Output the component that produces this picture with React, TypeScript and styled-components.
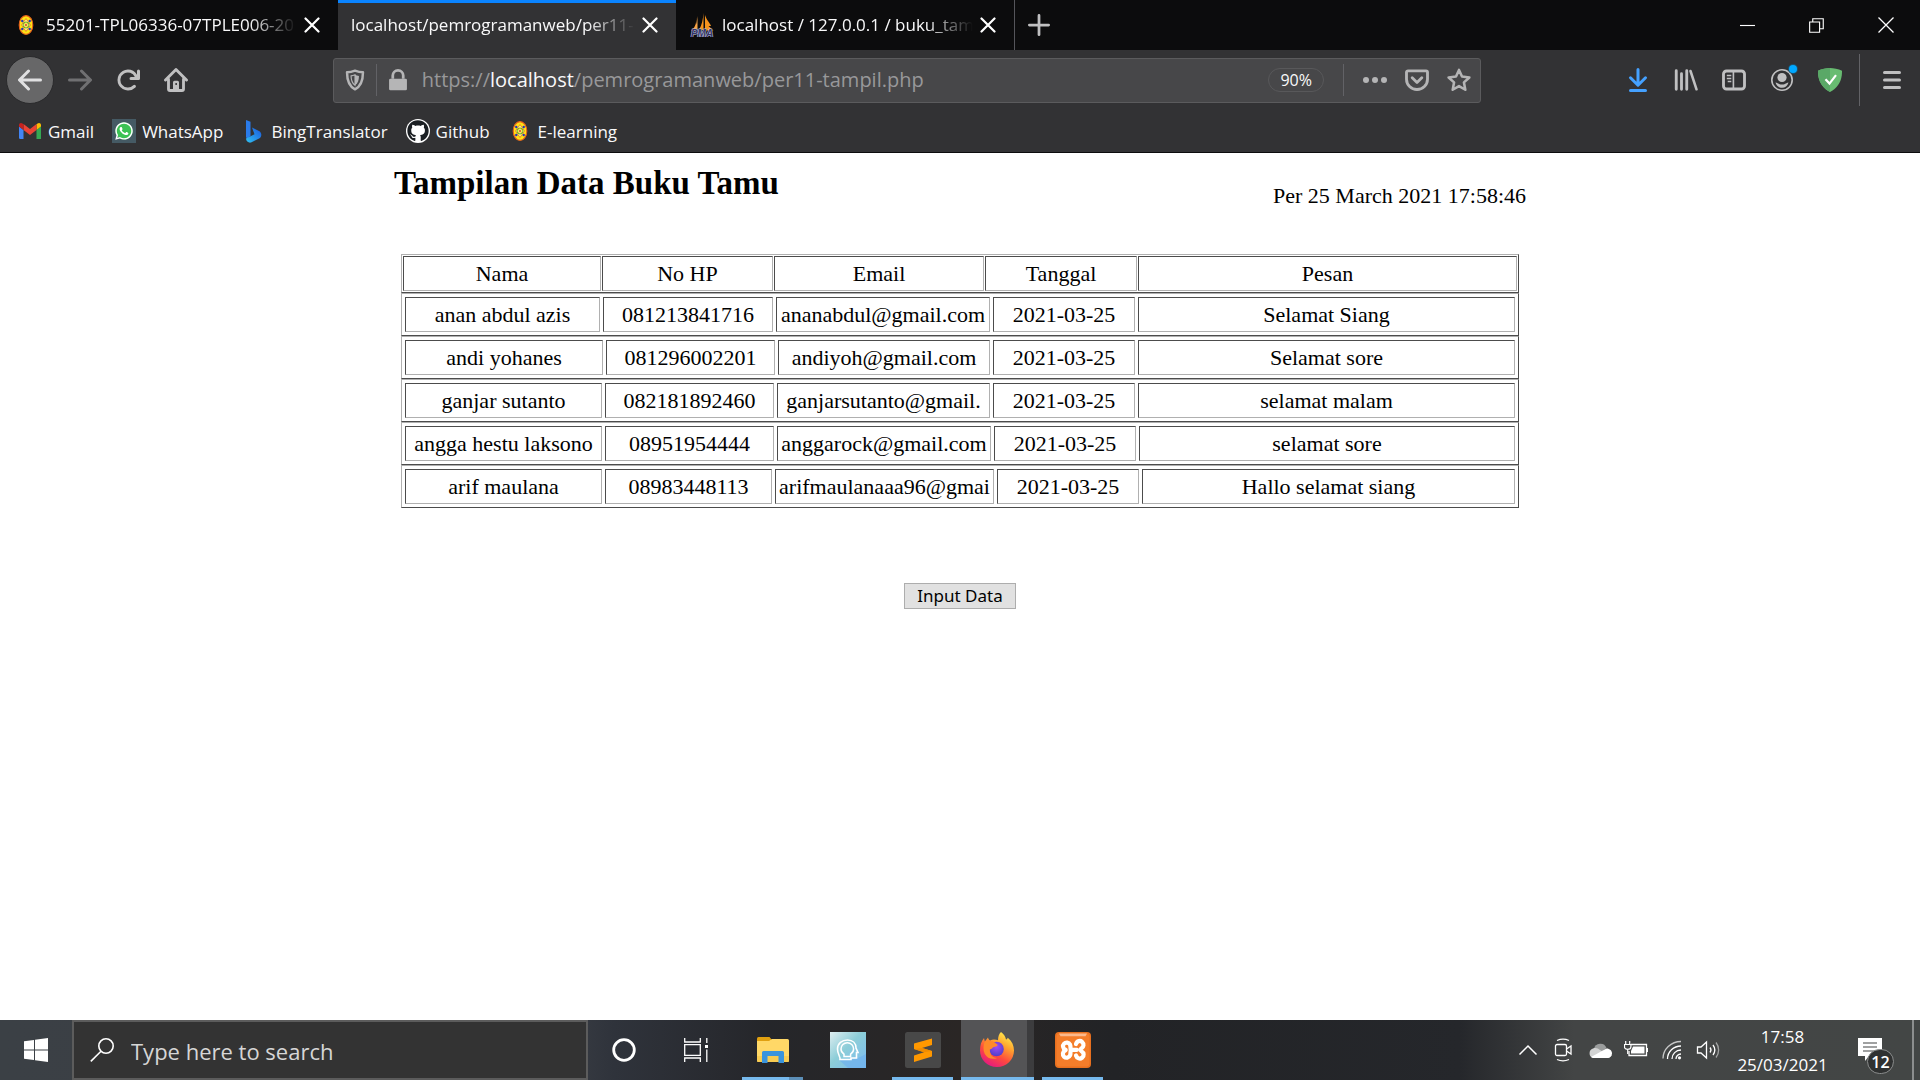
import React from "react";
import styled, { createGlobalStyle, css } from "styled-components";
import { FaGithub, FaWhatsapp } from "react-icons/fa";

const ui = `"Open Sans", "Noto Sans", sans-serif`;

const Global = createGlobalStyle`
  *, *::before, *::after { box-sizing: border-box; }
  body { margin: 0; background: #fff; }
  button { border: 0; padding: 0; background: none; color: inherit; font: inherit; }
`;

const Shell = styled.div`
  display: flex;
  flex-direction: column;
  min-height: 100vh;
`;

/* ---------- tab strip ---------- */

const Chrome = styled.header`
  background: #323234;
  color: #f9f9fa;
  font-family: ${ui};
  font-size: 17px;
  border-bottom: 1px solid #0c0c0d;
`;

const TabStrip = styled.div`
  display: flex;
  height: 50px;
  background: #0c0c0d;
`;

const Tab = styled.div<{ $active?: boolean; $plain?: boolean }>`
  display: flex;
  align-items: center;
  width: 338px;
  padding: 0 11px 0 ${(p) => (p.$plain ? 13 : 14)}px;
  ${(p) =>
    p.$active &&
    css`
      background: #323234;
      box-shadow: inset 0 3px #0a84ff;
    `}
`;

const TabTitle = styled.span`
  flex: 1;
  min-width: 0;
  white-space: nowrap;
  line-height: 24px;
  mask-image: linear-gradient(to left, transparent, #000 48px);
`;

const TabIcon = styled.span`
  display: flex;
  width: 24px;
  margin-right: 8px;
`;

const TabClose = styled.button`
  display: flex;
  justify-content: center;
  width: 30px;
`;

const NewTab = styled.button`
  display: flex;
  align-items: center;
  justify-content: center;
  width: 48px;
  border-left: 1px solid #55555a;
`;

const WindowButtons = styled.div`
  display: flex;
  margin-left: auto;
`;

const WindowButton = styled.button`
  display: flex;
  align-items: center;
  justify-content: center;
  width: 69px;
`;

/* ---------- navigation bar ---------- */

const NavBar = styled.div`
  display: flex;
  align-items: center;
  height: 60px;
  padding: 0 4px 0 6px;
  color: #c0c0c1;
`;

const BackButton = styled.button`
  display: flex;
  align-items: center;
  justify-content: center;
  width: 48px;
  height: 48px;
  margin-right: 2px;
  border: 1px solid #2a2a2c;
  border-radius: 50%;
  background: #676768;
  color: #e0e0e1;
`;

const ToolButton = styled.button<{ $color?: string; $width?: number }>`
  display: flex;
  align-items: center;
  justify-content: center;
  width: ${(p) => p.$width ?? 48}px;
  height: 44px;
  color: ${(p) => p.$color ?? "inherit"};
`;

const Spring = styled.div`
  flex: 133 1 0;
`;

const UrlBar = styled.div`
  display: flex;
  align-items: center;
  flex: 1148 1 0;
  height: 45px;
  border: 1px solid #5b5b5d;
  border-radius: 3px;
  background: #474749;
  color: #b5b5b6;
`;

const Rule = styled.span<{ $tall?: boolean }>`
  width: 1px;
  height: ${(p) => (p.$tall ? 52 : 32)}px;
  background: #626266;
`;

const UrlText = styled.div`
  flex: 1;
  padding-left: 3px;
  color: #98989a;
  font-size: 20px;
  line-height: 30px;
  white-space: nowrap;
  overflow: hidden;
`;

const Host = styled.span`
  color: #f9f9fa;
`;

const ZoomLevel = styled.button`
  width: 56px;
  height: 24px;
  margin-right: 19px;
  border: 1px solid #58585a;
  border-radius: 12px;
  color: #f9f9fa;
  font-size: 16px;
  line-height: 22px;
`;

const PageActions = styled.div`
  display: flex;
  padding-left: 10px;
`;

const MenuGroup = styled.div`
  display: flex;
  align-items: center;
  gap: 8px;
  padding-left: 5px;
`;

const Bookmarks = styled.nav`
  display: flex;
  gap: 18px;
  height: 42px;
  padding-left: 18px;
`;

const Bookmark = styled.a`
  display: flex;
  align-items: center;
  gap: 6px;
  color: inherit;
  text-decoration: none;
`;

/* ---------- guest book page ---------- */

const Page = styled.main`
  flex: 1;
  width: 100%;
  max-width: 1134px;
  margin: 0 auto;
  padding-top: 12px;
  color: #000;
  font-family: "Liberation Serif", "Times New Roman", serif;
  font-size: 22px;
`;

const PageHead = styled.div`
  display: flex;
  justify-content: space-between;
  align-items: flex-start;
  height: 89px;
`;

const Title = styled.h1`
  margin: 0;
  padding-left: 1px;
  font-size: 33px;
  line-height: 36px;
`;

const Stamp = styled.p`
  margin: 0;
  padding: 18px 1px 0 0;
  line-height: 26px;
`;

const Guests = styled.table`
  display: block;
  margin: 0 8px;
`;

const HeadGroup = styled.thead`
  display: block;
`;

const BodyGroup = styled.tbody`
  display: block;
`;

const Row = styled.tr<{ $columns: number[]; $head?: boolean }>`
  display: grid;
  grid-template-columns: ${(p) => p.$columns.map((c) => `minmax(0, ${c}fr)`).join(" ")};
  gap: ${(p) => (p.$head ? 1 : 3)}px;
  padding: ${(p) => (p.$head ? 1 : 3)}px;
  border: 1px solid;
  border-color: #b0b0b0 #4c4c4c #4c4c4c #b0b0b0;
`;

const cell = css`
  border: 1px solid;
  border-color: #4c4c4c #b0b0b0 #b0b0b0 #4c4c4c;
  padding: 3px;
  line-height: 27px;
  font-weight: normal;
  text-align: center;
  white-space: nowrap;
`;

const HeadCell = styled.th`
  ${cell}
`;

const Cell = styled.td`
  ${cell}
`;

const Actions = styled.div`
  display: flex;
  justify-content: center;
  padding-top: 75px;
`;

const InputButton = styled.button`
  padding: 0 12px;
  border: 1px solid #adadad;
  background: #e1e1e1;
  font-family: "Noto Sans", sans-serif;
  font-size: 17px;
  line-height: 24px;
`;

/* ---------- taskbar ---------- */

const Taskbar = styled.footer`
  display: flex;
  height: 60px;
  background: linear-gradient(90deg, #3b4045 0%, #3a3e45 29%, #2f333b 32%, #25262a 40%, #2a2625 50%, #222326 58%, #25272b 76%, #434545 82%, #434645 100%);
  color: #fff;
  font-family: ${ui};
`;

const StartButton = styled.button`
  display: flex;
  align-items: center;
  justify-content: center;
  width: 72px;
`;

const SearchBox = styled.label`
  display: flex;
  align-items: center;
  gap: 17px;
  width: 516px;
  padding-left: 16px;
  border: 2px solid #5c5c5c;
  background: #333;
`;

const SearchInput = styled.input`
  flex: 1;
  min-width: 0;
  padding: 2px 0 0;
  border: 0;
  outline: 0;
  background: none;
  color: #fff;
  font-family: ${ui};
  font-size: 22px;
  &::placeholder { color: #d6d6d6; opacity: 1; }
`;

const TaskButton = styled.button<{ $open?: boolean; $active?: boolean; $stacked?: boolean; $width?: number }>`
  display: flex;
  align-items: center;
  justify-content: center;
  width: ${(p) => p.$width ?? 61}px;
  margin-right: ${(p) => (p.$active ? 8 : 14)}px;
  ${(p) => p.$open && css`box-shadow: inset 0 -3px #76b9ed;`}
  ${(p) =>
    p.$stacked &&
    css`
      box-shadow: none;
      background: linear-gradient(90deg, #76b9ed 47px, #5c8fb8 47px) bottom / 100% 3px no-repeat;
    `}
  ${(p) =>
    p.$active &&
    css`
      margin-left: -6px;
      padding-right: 1px;
      background: linear-gradient(90deg, #545456 66px, #3c3c3e 66px);
    `}
`;

const Plain = styled.div`
  display: flex;
  padding-right: 10px;
`;

const PlainButton = styled.button`
  display: flex;
  align-items: center;
  justify-content: center;
  width: 72px;
`;

const Tray = styled.div`
  display: flex;
  align-items: center;
  margin-left: auto;
`;

const TrayButton = styled.button`
  display: flex;
  align-items: center;
  justify-content: center;
  width: 36px;
  height: 60px;
`;

const Clock = styled.button`
  width: 113px;
  padding-top: 1px;
  font-size: 17px;
  line-height: 28px;
  text-align: center;
`;

const NoticeButton = styled.button`
  display: flex;
  align-items: center;
  position: relative;
  width: 73px;
  height: 60px;
  padding-left: 19px;
`;

const NoticeCount = styled.span`
  position: absolute;
  left: 28px;
  top: 29px;
  width: 27px;
  height: 25px;
  border: 1px solid #8a8c8c;
  border-radius: 13px;
  background: #2f3131;
  font-size: 16px;
  font-weight: 600;
  line-height: 24px;
  text-align: center;
`;

const ShowDesktop = styled.button`
  width: 8px;
  height: 60px;
  border-left: 2px solid #8c8e8e;
`;

/* ---------- drawings ---------- */

const Icon = ({ children, size = 24, box = 16 }: { children: React.ReactNode; size?: number; box?: number }) => (
  <svg width={size} height={size} viewBox={`0 0 ${box} ${box}`} fill="currentColor" aria-hidden="true">
    {children}
  </svg>
);

const Campus = () => (
  <Icon box={24}>
    <ellipse cx="12" cy="12" rx="6.8" ry="9.4" fill="#ffe414" stroke="#e8611c" strokeWidth="1.100" />
    <path d="M12 5.500l4.500 6.500-4.500 6.500L7.500 12z" fill="#fff08a" stroke="#e8711c" strokeWidth=".8" />
    <circle cx="12" cy="12" r="3" fill="#f3ef5a" stroke="#6ab52c" strokeWidth="1" />
    <path d="M10.500 10.500l3 3M13.500 10.500l-3 3" stroke="#c33" strokeWidth=".7" />
    <g fill="#2536b8">
      <circle cx="8.300" cy="8" r="1.200" />
      <circle cx="15.700" cy="8" r="1.200" />
      <circle cx="8.300" cy="16" r="1.200" />
      <circle cx="15.700" cy="16" r="1.200" />
    </g>
  </Icon>
);

const PmaLogo = () => (
  <Icon box={24}>
    <path d="M6 4.500C6.500 9 6 14 1 17.500h5z" fill="#f0902a" />
    <path d="M7.500 3v14H3.500C6 13 7 8 7.500 3z" fill="#f7a54a" />
    <path d="M13.500 0v17H9C12 12 13 6 13.500 0z" fill="#f7941d" />
    <path d="M15 2c1.500 5 5 8 6 11h-2.500l5 4.500H15z" fill="#f7941d" />
    <text x="12" y="23.500" textAnchor="middle" fontFamily="Liberation Sans, sans-serif" fontSize="10" fontWeight="bold" fontStyle="italic" fill="#34346a" stroke="#b9bcd6" strokeWidth="1.200" paintOrder="stroke">PMA</text>
  </Icon>
);

const Cross = () => (
  <Icon size={16}>
    <path d="M1.500 1.500l13 13M14.500 1.500l-13 13" stroke="#fff" strokeWidth="2.200" strokeLinecap="round" />
  </Icon>
);

const BackArrow = () => (
  <Icon>
    <path d="M15 7H3.414l4.293-4.293a1 1 0 0 0-1.414-1.414l-6 6a1 1 0 0 0 0 1.414l6 6a1 1 0 0 0 1.414-1.414L3.414 9H15a1 1 0 0 0 0-2z" />
  </Icon>
);

const ForwardArrow = () => (
  <Icon>
    <path d="M1 7h11.586L8.293 2.707a1 1 0 0 1 1.414-1.414l6 6a1 1 0 0 1 0 1.414l-6 6a1 1 0 0 1-1.414-1.414L12.586 9H1a1 1 0 0 1 0-2z" />
  </Icon>
);

const Reload = () => (
  <Icon>
    <path d="M15 1a1 1 0 0 0-1 1v2.418A6.995 6.995 0 1 0 8 15a6.954 6.954 0 0 0 4.950-2.050 1 1 0 0 0-1.414-1.414A5.019 5.019 0 1 1 12.549 6H10a1 1 0 0 0 0 2h5a1 1 0 0 0 1-1V2a1 1 0 0 0-1-1z" />
  </Icon>
);

const Home = () => (
  <Icon>
    <path d="M1 8l7-7 7 7M3 7.500V14a1 1 0 0 0 1 1h8a1 1 0 0 0 1-1V7.500" fill="none" stroke="currentColor" strokeWidth="1.900" strokeLinecap="round" strokeLinejoin="round" />
    <path d="M6 14.500V9.500a1 1 0 0 1 1-1h2a1 1 0 0 1 1 1v5zM7.600 10v1.400h1V10z" fillRule="evenodd" />
  </Icon>
);

const Shield = () => (
  <Icon size={22}>
    <path d="M8 1.200c2 .8 4 1.200 5.800 1.200 0 5.600-1 10-5.800 12.400C3.200 12.400 2.200 8 2.200 2.400 4 2.400 6 2 8 1.200z" fill="none" stroke="currentColor" strokeWidth="1.800" strokeLinejoin="round" />
    <path d="M8 4.200c.9.400 1.900.7 2.900.8-.1 3-.7 5.300-2.900 6.900z" />
    <path d="M8 4.200v7.700C5.800 10.300 5.200 8 5.100 5c1-.1 2-.4 2.900-.8z" fill="none" stroke="currentColor" strokeWidth=".8" />
  </Icon>
);

const Lock = () => (
  <Icon size={22}>
    <path d="M4.200 7V4.800a3.800 3.800 0 0 1 7.600 0V7" fill="none" stroke="currentColor" strokeWidth="2" />
    <rect x="1.500" y="7" width="13" height="8.500" rx="1" />
  </Icon>
);

const Dots = () => (
  <Icon>
    <circle cx="2" cy="8" r="2" />
    <circle cx="8" cy="8" r="2" />
    <circle cx="14" cy="8" r="2" />
  </Icon>
);

const Pocket = () => (
  <Icon>
    <path d="M2 1.900h12a1 1 0 0 1 1 1V7.500A7 6.800 0 0 1 1 7.500V2.900a1 1 0 0 1 1-1z" fill="none" stroke="currentColor" strokeWidth="1.900" />
    <path d="M4.800 6.500L8 9.600l3.200-3.100" fill="none" stroke="currentColor" strokeWidth="1.900" strokeLinecap="round" strokeLinejoin="round" />
  </Icon>
);

const Star = () => (
  <Icon>
    <path d="M8 1.300l2 4.400 4.900.6-3.600 3.300.9 4.900L8 12.100l-4.200 2.400.9-4.900L1.100 6.300 6 5.700z" fill="none" stroke="currentColor" strokeWidth="1.700" strokeLinejoin="round" />
  </Icon>
);

const Download = () => (
  <Icon>
    <path d="M8 1v9.500M3 6.500l5 5 5-5M3 15h10" fill="none" stroke="currentColor" strokeWidth="2" strokeLinecap="round" strokeLinejoin="round" />
  </Icon>
);

const Library = () => (
  <Icon>
    <path d="M1.500 1.800v12.400M5 3.800v10.400M8.500 1.800v12.400" fill="none" stroke="currentColor" strokeWidth="1.900" strokeLinecap="round" />
    <path d="M11 2l4 12.200" fill="none" stroke="currentColor" strokeWidth="1.700" strokeLinecap="round" />
  </Icon>
);

const Sidebar = () => (
  <Icon>
    <rect x="1" y="2" width="14" height="12" rx="2" fill="none" stroke="currentColor" strokeWidth="1.900" />
    <path d="M7.600 2v12" stroke="currentColor" strokeWidth="1.100" />
    <path d="M3.200 5h3M3.200 7h3M3.800 9h2.400" stroke="currentColor" strokeWidth="1" />
  </Icon>
);

const Account = () => (
  <svg width="32" height="36" viewBox="0 0 32 36" aria-hidden="true">
    <circle cx="16" cy="18" r="10.200" fill="none" stroke="#c0c0c1" strokeWidth="1.600" />
    <circle cx="16" cy="15.500" r="4.600" fill="#c0c0c1" />
    <path d="M9.500 20.500c1.600.2 2.600 1 3.500 1.500 2 .8 4 .8 6 0 .9-.5 1.900-1.300 3.500-1.500-1 3.600-3.500 5.200-6.500 5.200s-5.500-1.600-6.500-5.200z" fill="#c0c0c1" />
    <circle cx="27" cy="7" r="5" fill="#20506a" />
    <circle cx="27" cy="7" r="4" fill="#00a8ff" />
  </svg>
);

const Guard = () => (
  <Icon box={24}>
    <path d="M12 0C8.300 0 3.800.9 0 2.800 0 7 0 17.600 12 24 24 17.600 24 7 24 2.800 20.200.9 15.700 0 12 0z" fill="#68bc71" />
    <path d="M12 0C8.300 0 3.800.9 0 2.800 0 7 0 17.600 12 24z" fill="#5aa867" />
    <path d="M7.500 11.200l4 4.400 6.500-8.400" fill="none" stroke="#fff" strokeWidth="2.200" />
  </Icon>
);

const Burger = () => (
  <Icon>
    <path d="M3 3h10M3 8h10M3 13h10" stroke="currentColor" strokeWidth="2" strokeLinecap="round" />
  </Icon>
);

const GmailLogo = () => (
  <Icon size={24} box={24}>
    <path d="M1.500 20h4V11L1 7.500v11z" fill="#4285f4" />
    <path d="M18.500 20H23V7.500L18.500 11z" fill="#34a853" />
    <path d="M18.500 5.500V11L23 7.500V6c0-2.200-2.300-2.600-3.500-1.500z" fill="#fbbc04" />
    <path d="M5.500 11V5l6.500 5 6.500-5v6L12 16z" fill="#ea4335" />
    <path d="M1 6v1.500L5.500 11V5.500l-1-1C3.200 3.400 1 3.800 1 6z" fill="#c5221f" />
  </Icon>
);

const WhatsLogo = styled.span`
  display: flex;
  align-items: center;
  justify-content: center;
  width: 24px;
  height: 24px;
  background: radial-gradient(circle, #3cc254 8px, #455a64 9px);
  color: #fff;
`;

const BingLogo = () => (
  <Icon size={24} box={24}>
    <defs>
      <linearGradient id="bing" x1="0" y1="1" x2="1" y2="0">
        <stop offset="0" stopColor="#2fc2f2" />
        <stop offset="1" stopColor="#1b55dc" />
      </linearGradient>
    </defs>
    <path d="M5 1l4.500 1.700v14L6.300 20.500 5 18z" fill="#2a7bea" />
    <path d="M11 8.500l7.500 3.800c2.500 2 2.200 5 .5 6.700L10 23.500c-2 .6-5-.8-5-4l8.500-4.200z" fill="url(#bing)" />
  </Icon>
);

const GithubLogo = styled.span`
  display: flex;
  padding: 1px;
  border-radius: 50%;
  background: #fff;
  color: #1b1f23;
`;

const WindowsLogo = () => (
  <Icon box={24}>
    <path d="M0 3.200L10 1.900v9.600H0zM11 1.700L24 0v11.500H11zM0 12.500h10v9.600L0 20.800zM11 12.500h13V24l-13-1.700z" fill="#fff" />
  </Icon>
);

const Loupe = () => (
  <Icon box={24}>
    <circle cx="16" cy="8" r="7.200" fill="none" stroke="#fff" strokeWidth="1.600" />
    <path d="M11 13.200L.8 23.400" stroke="#fff" strokeWidth="1.600" />
  </Icon>
);

const TaskView = () => (
  <Icon box={24}>
    <path d="M.7 0v4h15.600V0M.7 24v-4h15.600v4M.7 6.700h15.600v10.600H.7zM22.800 0v5M22.800 11.500V24" fill="none" stroke="#fff" strokeWidth="1.300" />
    <rect x="21" y="7" width="3" height="3" fill="#fff" />
  </Icon>
);

const Folder = () => (
  <Icon size={36} box={36}>
    <path d="M2 6.500a1.500 1.500 0 0 1 1.500-1.500h11L17 8v4H2z" fill="#e0a010" />
    <path d="M2 9h12l3-2h15.500A1.500 1.500 0 0 1 34 8.500v20a1.500 1.500 0 0 1-1.500 1.500h-29A1.500 1.500 0 0 1 2 28.500z" fill="#ffd867" />
    <path d="M2 24h32v4.500a1.500 1.500 0 0 1-1.500 1.500h-29A1.500 1.500 0 0 1 2 28.500z" fill="#f8cc52" />
    <path d="M7 31V20.500A1.500 1.500 0 0 1 8.500 19h19a1.500 1.500 0 0 1 1.500 1.500V31h-5.500v-7h-11v7z" fill="#3a94dd" />
  </Icon>
);

const HeadApp = () => (
  <Icon size={36} box={36}>
    <defs>
      <linearGradient id="head" x1="0" y1="0" x2="1" y2="1">
        <stop offset="0" stopColor="#dfeef0" />
        <stop offset=".45" stopColor="#8ccdd8" />
        <stop offset="1" stopColor="#7cbcf2" />
      </linearGradient>
    </defs>
    <path d="M0 0h36v36H0z" fill="url(#head)" />
    <path d="M9 28l9 8h18V22l-10 5z" fill="#6fb2ee" opacity=".7" />
    <path d="M10 27.500c.5-3-2.500-5.500-2.500-10.500C7.500 11.500 12 8 17.500 8S26 11.500 26 16l2 4.500h-1.500V26H21v1.500z" fill="none" stroke="#fff" strokeWidth="1.600" />
    <path d="M14 24.500v-2.300c-2-1.400-3-3-3-5.200a6.300 6.300 0 0 1 12.600 0c0 2.200-1 3.800-3 5.200v2.300z" fill="none" stroke="#fff" strokeWidth="1.500" />
  </Icon>
);

const Sublime = () => (
  <Icon size={36} box={36}>
    <rect width="36" height="36" rx="2.500" fill="#484848" />
    <path d="M9 11.500L27 6.500V13L17 16l10 3v5.500L9 30v-6.500l10-3.200L9 17z" fill="#ff9800" />
    <path d="M9 17l10 3.300 8-1.300-10-3z" fill="#f08c00" />
  </Icon>
);

const Firefox = () => (
  <Icon size={36} box={36}>
    <defs>
      <linearGradient id="fox" x1=".8" y1="0" x2=".25" y2="1">
        <stop offset="0" stopColor="#fff44f" />
        <stop offset=".35" stopColor="#ffa02e" />
        <stop offset=".65" stopColor="#ff4a3d" />
        <stop offset="1" stopColor="#e31587" />
      </linearGradient>
      <radialGradient id="globe" cx=".5" cy=".35" r=".7">
        <stop offset="0" stopColor="#a04cf5" />
        <stop offset="1" stopColor="#4a3ec4" />
      </radialGradient>
    </defs>
    <path d="M22 0c3 2 4.500 5 5 7.500 1-.4 1.500-1 1.800-1.800C33 9 35 13.500 35 18.500 35 27.500 27.500 35 18 35S1 27.500 1 18.500C1 13 2.500 9 5 6l.8 3.500L9 5.500c.3 1.500 1 2.300 2 3 3-1.500 6-.8 8-.3C19 4.500 20 2 22 0z" fill="url(#fox)" />
    <circle cx="17.500" cy="17" r="7.300" fill="url(#globe)" />
    <path d="M5.800 9.500c4-1.500 8-1 10.500 1.500l2.500 2c-1 1.500-2.500 1.500-4 2-1.500.7-1.500 2-4 2.500 0 5 3 8.500 7.500 8.500-5 2-10 .5-12.500-4-2-4-1.500-8.500 0-12.500z" fill="#ff8a2a" />
  </Icon>
);

const Xampp = () => (
  <Icon size={36} box={36}>
    <rect width="36" height="36" rx="4" fill="#e8701f" />
    <rect x="1.500" y="1.500" width="33" height="33" rx="3" fill="#f47d2a" />
    <path d="M4 1.500h28l-1.500 2.700h-25z" fill="#fbb98c" />
    <g fill="none" stroke="#fff" strokeWidth="4.200" strokeLinecap="round" strokeLinejoin="round">
      <path d="M17 17.800h5M16 18c-1-1.500 0-3-1-5.500a3.700 3.700 0 1 0-5 5c1 .5 1 .6 0 1.200a3.700 3.700 0 1 0 5 4.800c1-2 0-4 1-5.500" />
      <path d="M21 12c1-3.500 4.500-3.500 6-2.200 2.500 2.200 1.500 5.500-.5 6.500-1.200.8-1.200 2.200 0 3 2.500 1.500 3 4.500.5 6.500-2 1.500-5 .8-6-2.300" />
    </g>
  </Icon>
);

const Meet = () => (
  <Icon box={24}>
    <g fill="none" stroke="#fff" strokeWidth="1.300">
      <rect x="3.500" y="6.500" width="11" height="11" rx="1.500" />
      <path d="M14.500 11l4.500-3v8l-4.500-3M5 2.500c4-1.800 8-1.800 12 0M5 21.500c4 1.800 8 1.800 12 0" />
    </g>
  </Icon>
);

const Cloud = () => (
  <Icon box={24}>
    <path d="M6 11a6.500 6.500 0 0 1 12.500-1L13 15z" fill="#9b9d9d" />
    <path d="M5 20a5 5 0 0 1 0-9.500c3-1 5 0 7 1.500l10 6.500a3 3 0 0 1-2 1.500z" fill="#d2d3d3" />
    <path d="M3 19l15.500-8.500C22 10.500 24 13 24 15.500S22 20 19.500 20H5z" fill="#fff" />
  </Icon>
);

const Battery = () => (
  <Icon box={24}>
    <path d="M7 6.500h15.500v11H5V13" fill="none" stroke="#fff" strokeWidth="1.300" />
    <path d="M9 8.500h11.500v7H7V13zM22.500 10H24v4h-1.500z" fill="#fff" />
    <path d="M1.700 3v3M5.700 3v3M.5 6.500h6.400V9c0 3-6.400 3-6.400 0zM3.700 11v5" fill="none" stroke="#fff" strokeWidth="1.200" />
  </Icon>
);

const Wifi = () => (
  <Icon box={24}>
    <g fill="none" stroke="#fff" strokeWidth="1.300">
      <path d="M3 20.500C3 11 11 3.500 21 3.500" opacity=".7" />
      <path d="M7.500 21C7.500 13.500 13.500 8 21 8" />
      <path d="M12 21c0-5 4-9 9-9" />
      <path d="M16 21c0-2.500 2-5 5-5" />
    </g>
    <circle cx="19.500" cy="19.800" r="1.600" fill="#fff" />
  </Icon>
);

const Volume = () => (
  <Icon box={24}>
    <g fill="none" stroke="#fff" strokeWidth="1.300">
      <path d="M1.500 9H5l5.500-5v16L5 15H1.500z" />
      <path d="M14 9.500c1.200 1.500 1.200 3.500 0 5M17 7c2.200 3 2.200 7 0 10" />
      <path d="M20 4.500c3.500 4.500 3.500 10.500 0 15" opacity=".5" />
    </g>
  </Icon>
);

/* ---------- data ---------- */

type Guest = { cells: string[]; columns: number[] };

const headings = ["Nama", "No HP", "Email", "Tanggal", "Pesan"];

const guests: Guest[] = [
  { cells: ["anan abdul azis", "081213841716", "ananabdul@gmail.com", "2021-03-25", "Selamat Siang"], columns: [195, 170, 214, 142, 377] },
  { cells: ["andi yohanes", "081296002201", "andiyoh@gmail.com", "2021-03-25", "Selamat sore"], columns: [198, 169, 212, 142, 377] },
  { cells: ["ganjar sutanto", "082181892460", "ganjarsutanto@gmail.", "2021-03-25", "selamat malam"], columns: [197, 169, 213, 142, 377] },
  { cells: ["angga hestu laksono", "08951954444", "anggarock@gmail.com", "2021-03-25", "selamat sore"], columns: [197, 169, 214, 142, 376] },
  { cells: ["arif maulana", "08983448113", "arifmaulanaaa96@gmai", "2021-03-25", "Hallo selamat siang"], columns: [197, 167, 219, 142, 373] },
];

export default function App() {
  return (
    <Shell>
      <Global />
      <Chrome>
        <TabStrip>
          <Tab>
            <TabIcon><Campus /></TabIcon>
            <TabTitle>55201-TPL06336-07TPLE006-20</TabTitle>
            <TabClose aria-label="Close tab"><Cross /></TabClose>
          </Tab>
          <Tab $active $plain>
            <TabTitle>localhost/pemrogramanweb/per11-</TabTitle>
            <TabClose aria-label="Close tab"><Cross /></TabClose>
          </Tab>
          <Tab>
            <TabIcon><PmaLogo /></TabIcon>
            <TabTitle>localhost / 127.0.0.1 / buku_tam</TabTitle>
            <TabClose aria-label="Close tab"><Cross /></TabClose>
          </Tab>
          <NewTab aria-label="New tab">
            <Icon size={22}><path d="M8 1v14M1 8h14" stroke="#c0c0c1" strokeWidth="2" strokeLinecap="round" /></Icon>
          </NewTab>
          <WindowButtons>
            <WindowButton aria-label="Minimize">
              <Icon size={15}><path d="M0 8h16" stroke="#fff" strokeWidth="1.200" /></Icon>
            </WindowButton>
            <WindowButton aria-label="Restore">
              <Icon size={15}><path d="M.7 4.200h10.600v11H.7zM4 4V.8h11.200v10.700h-3.700" fill="none" stroke="#fff" strokeWidth="1.200" /></Icon>
            </WindowButton>
            <WindowButton aria-label="Close">
              <Icon size={16}><path d="M.5.5l15 15M15.500.5l-15 15" stroke="#fff" strokeWidth="1.300" /></Icon>
            </WindowButton>
          </WindowButtons>
        </TabStrip>

        <NavBar>
          <BackButton aria-label="Back"><BackArrow /></BackButton>
          <ToolButton $color="#707072" aria-label="Forward"><ForwardArrow /></ToolButton>
          <ToolButton aria-label="Reload"><Reload /></ToolButton>
          <ToolButton aria-label="Home"><Home /></ToolButton>
          <Spring />
          <UrlBar>
            <ToolButton $width={42} aria-label="Tracking protection"><Shield /></ToolButton>
            <Rule />
            <ToolButton $width={42} aria-label="Site information"><Lock /></ToolButton>
            <UrlText role="textbox" aria-label="Address">
              https://<Host>localhost</Host>/pemrogramanweb/per11-tampil.php
            </UrlText>
            <ZoomLevel>90%</ZoomLevel>
            <Rule />
            <PageActions>
              <ToolButton $width={42} aria-label="Page actions"><Dots /></ToolButton>
              <ToolButton $width={42} aria-label="Save to Pocket"><Pocket /></ToolButton>
              <ToolButton $width={42} aria-label="Bookmark this page"><Star /></ToolButton>
            </PageActions>
          </UrlBar>
          <Spring />
          <ToolButton $color="#45a1ff" aria-label="Downloads"><Download /></ToolButton>
          <ToolButton aria-label="Library"><Library /></ToolButton>
          <ToolButton aria-label="Sidebars"><Sidebar /></ToolButton>
          <ToolButton aria-label="Account"><Account /></ToolButton>
          <ToolButton aria-label="Ad blocker"><Guard /></ToolButton>
          <MenuGroup>
            <Rule $tall />
            <ToolButton aria-label="Menu"><Burger /></ToolButton>
          </MenuGroup>
        </NavBar>

        <Bookmarks aria-label="Bookmarks">
          <Bookmark href="#gmail"><GmailLogo />Gmail</Bookmark>
          <Bookmark href="#whatsapp"><WhatsLogo><FaWhatsapp size={20} /></WhatsLogo>WhatsApp</Bookmark>
          <Bookmark href="#translator"><BingLogo />BingTranslator</Bookmark>
          <Bookmark href="#github"><GithubLogo><FaGithub size={22} /></GithubLogo>Github</Bookmark>
          <Bookmark href="#elearning"><Campus />E-learning</Bookmark>
        </Bookmarks>
      </Chrome>

      <Page>
        <PageHead>
          <Title>Tampilan Data Buku Tamu</Title>
          <Stamp>Per 25 March 2021 17:58:46</Stamp>
        </PageHead>
        <Guests>
          <HeadGroup>
            <Row $head $columns={[198, 171, 210, 152, 379]}>
              {headings.map((h) => <HeadCell key={h} scope="col">{h}</HeadCell>)}
            </Row>
          </HeadGroup>
          <BodyGroup>
            {guests.map((g) => (
              <Row key={g.cells[0]} $columns={g.columns}>
                {g.cells.map((c) => <Cell key={c}>{c}</Cell>)}
              </Row>
            ))}
          </BodyGroup>
        </Guests>
        <Actions><InputButton>Input Data</InputButton></Actions>
      </Page>

      <Taskbar>
        <StartButton aria-label="Start"><WindowsLogo /></StartButton>
        <SearchBox>
          <Loupe />
          <SearchInput aria-label="Search" placeholder="Type here to search" />
        </SearchBox>
        <Plain>
          <PlainButton aria-label="Cortana">
            <Icon box={24}><circle cx="12" cy="12" r="10.300" fill="none" stroke="#fff" strokeWidth="2.800" /></Icon>
          </PlainButton>
          <PlainButton aria-label="Task view"><TaskView /></PlainButton>
        </Plain>
        <TaskButton $open $stacked aria-label="File Explorer"><Folder /></TaskButton>
        <TaskButton aria-label="Brain app"><HeadApp /></TaskButton>
        <TaskButton $open aria-label="Sublime Text"><Sublime /></TaskButton>
        <TaskButton $open $active $width={73} aria-label="Firefox"><Firefox /></TaskButton>
        <TaskButton $open aria-label="XAMPP"><Xampp /></TaskButton>
        <Tray>
          <TrayButton aria-label="Show hidden icons">
            <Icon size={20} box={20}><path d="M1.500 14.500L10 6l8.500 8.500" fill="none" stroke="#fff" strokeWidth="1.500" /></Icon>
          </TrayButton>
          <TrayButton aria-label="Meet now"><Meet /></TrayButton>
          <TrayButton aria-label="OneDrive"><Cloud /></TrayButton>
          <TrayButton aria-label="Battery"><Battery /></TrayButton>
          <TrayButton aria-label="Network"><Wifi /></TrayButton>
          <TrayButton aria-label="Volume"><Volume /></TrayButton>
          <Clock>17:58<br />25/03/2021</Clock>
          <NoticeButton aria-label="Notifications">
            <Icon box={24}>
              <path d="M0 0h24v18H11l-4 5v-5H0z" fill="#fff" />
              <path d="M5 5h14M5 9h14M5 13h14" stroke="#434545" strokeWidth="1.200" />
            </Icon>
            <NoticeCount>12</NoticeCount>
          </NoticeButton>
          <ShowDesktop aria-label="Show desktop" />
        </Tray>
      </Taskbar>
    </Shell>
  );
}
